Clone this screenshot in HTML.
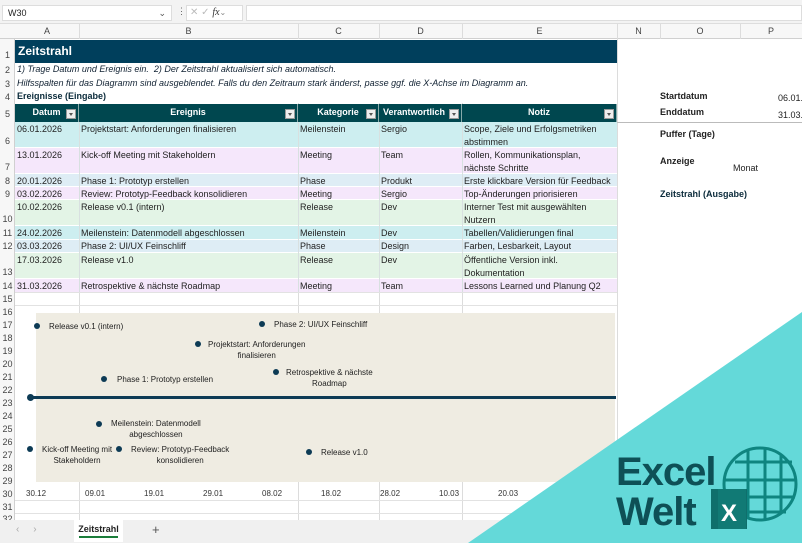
<!DOCTYPE html>
<html><head><meta charset="utf-8"><style>
*{margin:0;padding:0;box-sizing:border-box}
body{width:802px;height:543px;overflow:hidden;background:#fff;font-family:"Liberation Sans",sans-serif;font-size:9px;color:#222;position:relative}
.a{position:absolute}
.vl{position:absolute;width:1px;background:#dcdcdc}
.hl{position:absolute;height:1px;background:#e2e2e2}
.rn{position:absolute;left:0;width:15px;text-align:center;color:#444;font-size:9px}
.ch{position:absolute;top:24px;height:15px;line-height:15px;text-align:center;color:#444;font-size:9px}
.c{position:absolute;padding-left:2px;line-height:13px;font-size:9px;color:#222;white-space:nowrap;overflow:hidden}
.th{position:absolute;top:104px;height:18px;background:#00474f;color:#fff;font-weight:bold;text-align:center;line-height:17px;font-size:9px;border-right:1px solid #8aa}
.dd{position:absolute;top:5px;width:10px;height:10px;background:#eee;border:1px solid #999;right:2px}
.dd:after{content:"";position:absolute;left:2px;top:3px;border-left:2.5px solid transparent;border-right:2.5px solid transparent;border-top:3px solid #555}
.dot{position:absolute;width:6px;height:6px;border-radius:50%;background:#0d3b55}
.lb{position:absolute;font-size:8px;color:#222;text-align:center;line-height:11px;white-space:nowrap}
.ax{position:absolute;top:489px;font-size:8px;color:#333}
</style></head><body>
<div class="a" style="left:0;top:0;width:802px;height:24px;background:#f3f3f3;border-bottom:1px solid #ddd"></div>
<div class="a" style="left:2px;top:5px;width:170px;height:16px;background:#fff;border:1px solid #ddd;font-size:9px;line-height:14px;padding-left:5px">W30<span style="position:absolute;right:5px;color:#555">⌄</span></div>
<div class="a" style="left:177px;top:6px;color:#666;font-size:9px">⋮</div>
<div class="a" style="left:186px;top:5px;width:57px;height:16px;background:#fff;border:1px solid #ddd;font-size:10px;line-height:14px;color:#bbb;padding-left:3px">✕ ✓ <i style="color:#333;font-family:'Liberation Serif',serif">fx</i><span style="color:#888;font-size:8px">⌄</span></div>
<div class="a" style="left:246px;top:5px;width:556px;height:16px;background:#fff;border:1px solid #ddd"></div>
<div class="a" style="left:0;top:24px;width:802px;height:15px;background:#f7f7f7;border-bottom:1px solid #d0d0d0"></div>
<div class="ch" style="left:15px;width:64px">A</div>
<div class="ch" style="left:79px;width:219px">B</div>
<div class="ch" style="left:298px;width:81px">C</div>
<div class="ch" style="left:379px;width:83px">D</div>
<div class="ch" style="left:462px;width:155px">E</div>
<div class="ch" style="left:617px;width:43px">N</div>
<div class="ch" style="left:660px;width:80px">O</div>
<div class="ch" style="left:740px;width:62px">P</div>
<div class="a" style="left:0;top:39px;width:15px;height:481px;background:#f7f7f7;border-right:1px solid #d0d0d0"></div>
<div class="vl" style="left:79px;top:24px;height:15px"></div>
<div class="vl" style="left:298px;top:24px;height:15px"></div>
<div class="vl" style="left:379px;top:24px;height:15px"></div>
<div class="vl" style="left:462px;top:24px;height:15px"></div>
<div class="vl" style="left:617px;top:24px;height:496px"></div>
<div class="vl" style="left:79px;top:103px;height:417px"></div>
<div class="vl" style="left:298px;top:103px;height:417px"></div>
<div class="vl" style="left:379px;top:103px;height:417px"></div>
<div class="vl" style="left:462px;top:103px;height:417px"></div>
<div class="vl" style="left:660px;top:24px;height:15px"></div>
<div class="vl" style="left:740px;top:24px;height:15px"></div>
<div class="hl" style="left:15px;top:292px;width:602px"></div>
<div class="hl" style="left:15px;top:305px;width:602px"></div>
<div class="hl" style="left:15px;top:500px;width:602px"></div>
<div class="hl" style="left:15px;top:513px;width:602px"></div>
<div class="hl" style="left:617px;top:122px;width:185px;background:#bbb"></div>
<div class="rn" style="top:50px">1</div><div class="rn" style="top:65px">2</div><div class="rn" style="top:79px">3</div><div class="rn" style="top:92px">4</div><div class="rn" style="top:109px">5</div><div class="rn" style="top:136px">6</div><div class="rn" style="top:162px">7</div><div class="rn" style="top:176px">8</div><div class="rn" style="top:189px">9</div><div class="rn" style="top:214px">10</div><div class="rn" style="top:228px">11</div><div class="rn" style="top:241px">12</div><div class="rn" style="top:267px">13</div><div class="rn" style="top:281px">14</div><div class="rn" style="top:294px">15</div>
<div class="rn" style="top:307px">16</div><div class="rn" style="top:320px">17</div><div class="rn" style="top:333px">18</div><div class="rn" style="top:346px">19</div><div class="rn" style="top:359px">20</div><div class="rn" style="top:372px">21</div><div class="rn" style="top:385px">22</div><div class="rn" style="top:398px">23</div><div class="rn" style="top:411px">24</div><div class="rn" style="top:424px">25</div><div class="rn" style="top:437px">26</div><div class="rn" style="top:450px">27</div><div class="rn" style="top:463px">28</div><div class="rn" style="top:476px">29</div><div class="rn" style="top:489px">30</div><div class="rn" style="top:502px">31</div><div class="rn" style="top:514px">32</div>
<div class="a" style="left:15px;top:40px;width:602px;height:23px;background:#003f5c;color:#fff;font-weight:bold;font-size:12px;line-height:23px;padding-left:3px">Zeitstrahl</div>
<div class="c" style="left:15px;top:63px;font-style:italic;color:#123">1) Trage Datum und Ereignis ein.&nbsp; 2) Der Zeitstrahl aktualisiert sich automatisch.</div>
<div class="c" style="left:15px;top:77px;font-style:italic;color:#123">Hilfsspalten für das Diagramm sind ausgeblendet. Falls du den Zeitraum stark änderst, passe ggf. die X-Achse im Diagramm an.</div>
<div class="c" style="left:15px;top:90px;font-weight:bold;color:#0a2a3a">Ereignisse (Eingabe)</div>
<div class="th" style="left:15px;width:64px">Datum<div class="dd"></div></div>
<div class="th" style="left:79px;width:219px">Ereignis<div class="dd"></div></div>
<div class="th" style="left:298px;width:81px">Kategorie<div class="dd"></div></div>
<div class="th" style="left:379px;width:83px;text-align:left;padding-left:4px">Verantwortlich<div class="dd"></div></div>
<div class="th" style="left:462px;width:155px">Notiz<div class="dd"></div></div>
<div class="a" style="left:15px;top:122px;width:602px;height:26px;background:#cdeef0;border-bottom:1px solid #fff"></div>
<div class="a" style="left:15px;top:148px;width:602px;height:26px;background:#f5e7fb;border-bottom:1px solid #fff"></div>
<div class="a" style="left:15px;top:174px;width:602px;height:13px;background:#deedf5;border-bottom:1px solid #fff"></div>
<div class="a" style="left:15px;top:187px;width:602px;height:13px;background:#f5e7fb;border-bottom:1px solid #fff"></div>
<div class="a" style="left:15px;top:200px;width:602px;height:26px;background:#e3f4e6;border-bottom:1px solid #fff"></div>
<div class="a" style="left:15px;top:226px;width:602px;height:14px;background:#cdeef0;border-bottom:1px solid #fff"></div>
<div class="a" style="left:15px;top:240px;width:602px;height:13px;background:#deedf5;border-bottom:1px solid #fff"></div>
<div class="a" style="left:15px;top:253px;width:602px;height:26px;background:#e3f4e6;border-bottom:1px solid #fff"></div>
<div class="a" style="left:15px;top:279px;width:602px;height:13px;background:#f5e7fb"></div>
<div class="vl" style="left:79px;top:122px;height:170px;background:#d8e0e0"></div>
<div class="vl" style="left:298px;top:122px;height:170px;background:#d8e0e0"></div>
<div class="vl" style="left:379px;top:122px;height:170px;background:#d8e0e0"></div>
<div class="vl" style="left:462px;top:122px;height:170px;background:#d8e0e0"></div>

<div class="c" style="left:15px;top:123px">06.01.2026</div><div class="c" style="left:79px;top:123px">Projektstart: Anforderungen finalisieren</div><div class="c" style="left:298px;top:123px">Meilenstein</div><div class="c" style="left:379px;top:123px">Sergio</div><div class="c" style="left:462px;top:123px;white-space:normal;width:155px">Scope, Ziele und Erfolgsmetriken abstimmen</div>
<div class="c" style="left:15px;top:149px">13.01.2026</div><div class="c" style="left:79px;top:149px">Kick-off Meeting mit Stakeholdern</div><div class="c" style="left:298px;top:149px">Meeting</div><div class="c" style="left:379px;top:149px">Team</div><div class="c" style="left:462px;top:149px;white-space:normal;width:150px">Rollen, Kommunikationsplan, nächste Schritte</div>
<div class="c" style="left:15px;top:175px">20.01.2026</div><div class="c" style="left:79px;top:175px">Phase 1: Prototyp erstellen</div><div class="c" style="left:298px;top:175px">Phase</div><div class="c" style="left:379px;top:175px">Produkt</div><div class="c" style="left:462px;top:175px">Erste klickbare Version für Feedback</div>
<div class="c" style="left:15px;top:188px">03.02.2026</div><div class="c" style="left:79px;top:188px">Review: Prototyp-Feedback konsolidieren</div><div class="c" style="left:298px;top:188px">Meeting</div><div class="c" style="left:379px;top:188px">Sergio</div><div class="c" style="left:462px;top:188px">Top-Änderungen priorisieren</div>
<div class="c" style="left:15px;top:201px">10.02.2026</div><div class="c" style="left:79px;top:201px">Release v0.1 (intern)</div><div class="c" style="left:298px;top:201px">Release</div><div class="c" style="left:379px;top:201px">Dev</div><div class="c" style="left:462px;top:201px;white-space:normal;width:150px">Interner Test mit ausgewählten Nutzern</div>
<div class="c" style="left:15px;top:227px">24.02.2026</div><div class="c" style="left:79px;top:227px">Meilenstein: Datenmodell abgeschlossen</div><div class="c" style="left:298px;top:227px">Meilenstein</div><div class="c" style="left:379px;top:227px">Dev</div><div class="c" style="left:462px;top:227px">Tabellen/Validierungen final</div>
<div class="c" style="left:15px;top:240px">03.03.2026</div><div class="c" style="left:79px;top:240px">Phase 2: UI/UX Feinschliff</div><div class="c" style="left:298px;top:240px">Phase</div><div class="c" style="left:379px;top:240px">Design</div><div class="c" style="left:462px;top:240px">Farben, Lesbarkeit, Layout</div>
<div class="c" style="left:15px;top:254px">17.03.2026</div><div class="c" style="left:79px;top:254px">Release v1.0</div><div class="c" style="left:298px;top:254px">Release</div><div class="c" style="left:379px;top:254px">Dev</div><div class="c" style="left:462px;top:254px;white-space:normal;width:140px">Öffentliche Version inkl. Dokumentation</div>
<div class="c" style="left:15px;top:280px">31.03.2026</div><div class="c" style="left:79px;top:280px">Retrospektive &amp; nächste Roadmap</div><div class="c" style="left:298px;top:280px">Meeting</div><div class="c" style="left:379px;top:280px">Team</div><div class="c" style="left:462px;top:280px">Lessons Learned und Planung Q2</div>
<div class="c" style="left:658px;top:90px;font-weight:bold">Startdatum</div><div class="c" style="left:776px;top:92px">06.01.</div>
<div class="c" style="left:658px;top:106px;font-weight:bold">Enddatum</div><div class="c" style="left:776px;top:109px">31.03.</div>
<div class="c" style="left:658px;top:128px;font-weight:bold">Puffer (Tage)</div>
<div class="c" style="left:658px;top:155px;font-weight:bold">Anzeige</div><div class="c" style="left:731px;top:162px">Monat</div>
<div class="c" style="left:658px;top:188px;font-weight:bold;color:#0a2a3a">Zeitstrahl (Ausgabe)</div>
<div class="a" style="left:36px;top:313px;width:579px;height:169px;background:#efece2"></div>
<div class="a" style="left:30px;top:396px;width:586px;height:3px;background:#0d3b55"></div>
<div class="dot" style="left:27px;top:394px;width:7px;height:7px"></div>
<div class="dot" style="left:34px;top:323px"></div><div class="lb" style="left:49px;top:321px">Release v0.1 (intern)</div>
<div class="dot" style="left:259px;top:321px"></div><div class="lb" style="left:274px;top:319px">Phase 2: UI/UX Feinschliff</div>
<div class="dot" style="left:195px;top:341px"></div><div class="lb" style="left:208px;top:339px">Projektstart: Anforderungen<br>finalisieren</div>
<div class="dot" style="left:273px;top:369px"></div><div class="lb" style="left:286px;top:367px">Retrospektive &amp; nächste<br>Roadmap</div>
<div class="dot" style="left:101px;top:376px"></div><div class="lb" style="left:117px;top:374px">Phase 1: Prototyp erstellen</div>
<div class="dot" style="left:96px;top:421px"></div><div class="lb" style="left:111px;top:418px">Meilenstein: Datenmodell<br>abgeschlossen</div>
<div class="dot" style="left:27px;top:446px"></div><div class="lb" style="left:42px;top:444px">Kick-off Meeting mit<br>Stakeholdern</div>
<div class="dot" style="left:116px;top:446px"></div><div class="lb" style="left:131px;top:444px">Review: Prototyp-Feedback<br>konsolidieren</div>
<div class="dot" style="left:306px;top:449px"></div><div class="lb" style="left:321px;top:447px">Release v1.0</div>
<div class="ax" style="left:26px">30.12</div><div class="ax" style="left:85px">09.01</div><div class="ax" style="left:144px">19.01</div><div class="ax" style="left:203px">29.01</div><div class="ax" style="left:262px">08.02</div><div class="ax" style="left:321px">18.02</div><div class="ax" style="left:380px">28.02</div><div class="ax" style="left:439px">10.03</div><div class="ax" style="left:498px">20.03</div>
<div class="a" style="left:0;top:520px;width:802px;height:23px;background:#f0f0f0"></div>
<div class="a" style="left:16px;top:524px;color:#aaa;font-size:10px">‹&nbsp;&nbsp;&nbsp;&nbsp;&nbsp;›</div>
<div class="a" style="left:74px;top:520px;width:49px;height:22px;background:#fff;font-weight:bold;font-size:9px;text-align:center;line-height:19px;color:#222">Zeitstrahl<div style="position:absolute;left:5px;right:5px;bottom:4px;height:2px;background:#1b7d3a"></div></div>
<div class="a" style="left:152px;top:522px;color:#555;font-size:13px">+</div>
<svg class="a" style="left:0;top:0" width="802" height="543">
<polygon points="802,312 802,543 468,543" fill="#64d9d9"/>
<g fill="none" stroke="#0f8580" stroke-width="3">
<circle cx="760" cy="484" r="36"/>
<line x1="735" y1="462" x2="792" y2="462"/>
<line x1="724" y1="480" x2="796" y2="480"/>
<line x1="745" y1="497" x2="795" y2="497"/>
<line x1="745" y1="512" x2="786" y2="512"/>
<line x1="748" y1="451" x2="748" y2="519"/>
<line x1="765" y1="449" x2="765" y2="519"/>
<line x1="781" y1="455" x2="781" y2="512"/>
</g>
<rect x="711" y="489" width="36" height="40" fill="#0f6f6c"/>
<rect x="718" y="489" width="28" height="40" fill="#117a75"/>
<text x="729" y="521" font-family="Liberation Sans" font-weight="bold" font-size="24" fill="#fff" text-anchor="middle">X</text>
<text x="616" y="485" font-family="Liberation Sans" font-weight="bold" font-size="40" fill="#0e5056" letter-spacing="-1">Excel</text>
<text x="616" y="525" font-family="Liberation Sans" font-weight="bold" font-size="40" fill="#0e5056" letter-spacing="-1">Welt</text>
</svg>
</body></html>
